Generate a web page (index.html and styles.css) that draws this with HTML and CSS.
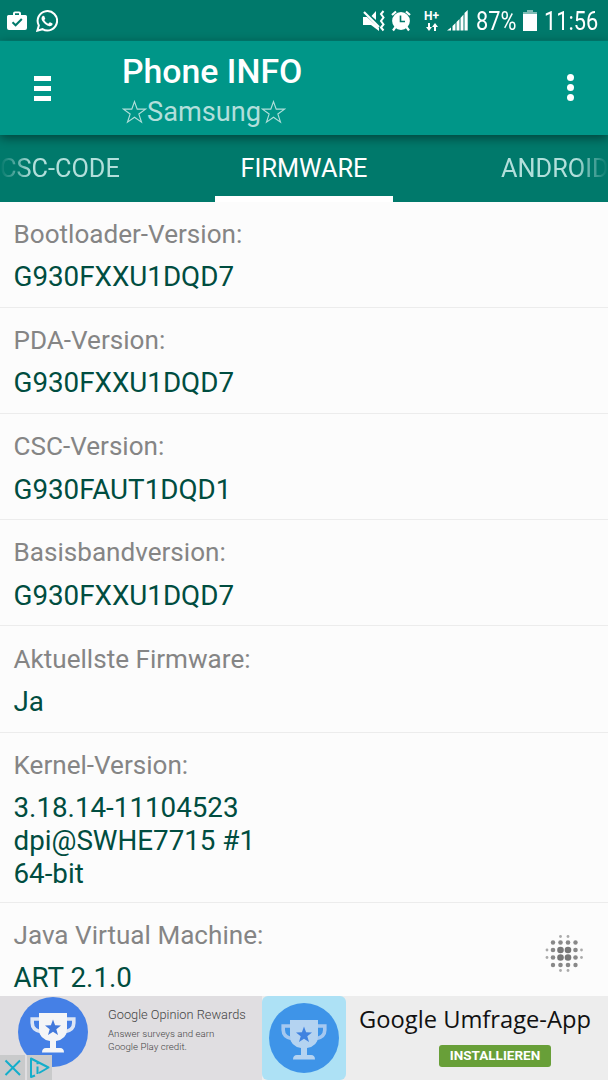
FILE: index.html
```html
<!DOCTYPE html>
<html lang="de">
<head>
    <meta charset="UTF-8">
    <meta name="viewport" content="width=device-width, initial-scale=1.0">
    <title>Phone INFO</title>
    <link rel="stylesheet" href="styles.css">
</head>
<body>
    <svg width="0" height="0" class="defs">
        <symbol id="trophy" viewBox="0 0 46 40">
            <path class="handles" d="M10 6H2.200V10Q2.200 17.500 12 19M36 6H43.800V10Q43.800 17.500 34 19" fill="none" stroke-width="3.600"/>
            <path class="cup" d="M9 0H37V16Q37 26 26 28V35H30Q34 35 34 39.500H12Q12 35 16 35H20V28Q9 26 9 16Z"/>
            <path class="star" d="M23 6.500L25.100 12.300L31 12.500L26.300 16.200L28 22L23 18.700L18 22L19.700 16.200L15 12.500L20.900 12.300Z"/>
        </symbol>
    </svg>
    <div class="status-bar">
        <svg class="icon-market" width="20" height="20" viewBox="0 0 20 20">
            <path fill="#fff" fill-rule="evenodd" d="M1.500 4H6V2.500Q6 .500 8 .500H12Q14 .500 14 2.500V4H18.500Q20 4 20 5.500V17Q20 19 18 19H2Q0 19 0 17V5.500Q0 4 1.500 4ZM8 4H12V2.300H8Z"/>
            <path fill="none" stroke="#00796b" stroke-width="2" d="M5.500 11.300L8.600 14.300L14.800 8"/>
        </svg>
        <svg class="icon-whatsapp" width="22" height="22" viewBox="0 0 24 24" fill="#fff">
            <path d="M17.472 14.382c-.297-.149-1.758-.867-2.030-.967-.273-.099-.471-.148-.670.150-.197.297-.767.966-.940 1.164-.173.199-.347.223-.644.075-.297-.150-1.255-.463-2.390-1.475-.883-.788-1.480-1.761-1.653-2.059-.173-.297-.018-.458.130-.606.134-.133.298-.347.446-.520.149-.174.198-.298.298-.497.099-.198.050-.371-.025-.520-.075-.149-.669-1.612-.916-2.207-.242-.579-.487-.500-.669-.510-.173-.008-.371-.010-.570-.010-.198 0-.520.074-.792.372-.272.297-1.040 1.016-1.040 2.479 0 1.462 1.065 2.875 1.213 3.074.149.198 2.096 3.200 5.077 4.487.709.306 1.262.489 1.694.625.712.227 1.360.195 1.871.118.571-.085 1.758-.719 2.006-1.413.248-.694.248-1.289.173-1.413-.074-.124-.272-.198-.570-.347"/>
            <path fill="none" stroke="#fff" stroke-width="2.200" d="M1.500 22.500L3.100 16.800A10.600 10.600 0 1 1 7.100 20.900Z"/>
        </svg>
        <svg class="icon-mute" width="22" height="22" viewBox="0 0 22 22">
            <path fill="#fff" d="M0 7H4L16 18V21L8 15H0ZM8.500 6L13 1V10Z"/>
            <path fill="none" stroke="#fff" stroke-width="2.200" d="M1 2L16 17"/>
            <path fill="none" stroke="#fff" stroke-width="2" d="M20.500 1L18 4L20.500 7.500L18 11L20.500 14.500L18 17.500L20.500 20.500"/>
        </svg>
        <svg class="icon-alarm" width="20" height="22" viewBox="0 0 20 22">
            <circle cx="10" cy="11" r="8.900" fill="#fff"/>
            <path fill="none" stroke="#fff" stroke-width="2.200" d="M1 5L5 1.500M19 5L15 1.500M4.500 17L2 20.500M15.500 17L18 20.500"/>
            <path fill="none" stroke="#00796b" stroke-width="1.600" d="M9.500 5.500V11.500H14"/>
        </svg>
        <div class="network">
            <span>H+</span>
            <svg width="12" height="8" viewBox="0 0 12 8" fill="#fff">
                <path d="M2 0H4V4H6L3 8L0 4H2ZM8 8H10V4H12L9 0L6 4H8Z"/>
            </svg>
        </div>
        <svg class="icon-signal" width="21" height="21" viewBox="0 0 21 21" fill="#fff">
            <path d="M0 20.500L4 17.500V20.500ZM5.500 16L8.500 13V20.500H5.500ZM9.500 12L12.500 9V20.500H9.500ZM13.500 8L16.500 4.500V20.500H13.500ZM17.500 3L20.700 0V20.500H17.500Z"/>
        </svg>
        <span class="status-text percent">87%</span>
        <svg class="icon-battery" width="14" height="21" viewBox="0 0 14 21">
            <path fill="#80bcb5" d="M4 0H10V2H14V4H0V2H4Z"/>
            <path fill="#fff" d="M0 4H14V21H0Z"/>
        </svg>
        <span class="status-text time">11:56</span>
    </div>

    <header class="toolbar">
        <div class="menu-btn"><i></i><i></i><i></i></div>
        <div class="titles">
            <h1>Phone INFO</h1>
            <div class="subtitle"><svg class="title-star" viewBox="0 0 24 23"><path d="M12 1.500L14.600 8.800H22.600L16.200 13.500L18.700 21.200L12 16.500L5.300 21.200L7.800 13.500L1.400 8.800H9.400Z"/></svg><span>Samsung</span><svg class="title-star" viewBox="0 0 24 23"><path d="M12 1.500L14.600 8.800H22.600L16.200 13.500L18.700 21.200L12 16.500L5.300 21.200L7.800 13.500L1.400 8.800H9.400Z"/></svg></div>
        </div>
        <div class="more-btn"><i></i><i></i><i></i></div>
    </header>

    <nav class="tabs">
        <div class="tab tab-prev"><span>CSC-CODE</span></div>
        <div class="tab active"><span>FIRMWARE</span></div>
        <div class="tab tab-next"><span>ANDROID</span></div>
    </nav>

    <main class="info-list">
        <div class="info">
            <div class="label">Bootloader-Version:</div>
            <div class="value">G930FXXU1DQD7</div>
        </div>
        <div class="info">
            <div class="label">PDA-Version:</div>
            <div class="value">G930FXXU1DQD7</div>
        </div>
        <div class="info">
            <div class="label">CSC-Version:</div>
            <div class="value">G930FAUT1DQD1</div>
        </div>
        <div class="info">
            <div class="label">Basisbandversion:</div>
            <div class="value">G930FXXU1DQD7</div>
        </div>
        <div class="info">
            <div class="label">Aktuellste Firmware:</div>
            <div class="value">Ja</div>
        </div>
        <div class="info info-multiline">
            <div class="label">Kernel-Version:</div>
            <div class="value">3.18.14-11104523<br>dpi@SWHE7715 #1<br>64-bit</div>
        </div>
        <div class="info">
            <div class="label">Java Virtual Machine:</div>
            <div class="value">ART 2.1.0</div>
        </div>
        <svg class="dots" width="40" height="40" viewBox="0 0 40 40">
            <g fill="#777">
                <circle cx="16.500" cy="16" r="3.300"/><circle cx="24" cy="16" r="3.300"/>
                <circle cx="16.500" cy="23.500" r="3.300"/><circle cx="24" cy="23.500" r="3.300"/>
            </g>
            <g fill="#888">
                <circle cx="9" cy="8.500" r="2.200"/><circle cx="16.500" cy="8.500" r="2.300"/><circle cx="24" cy="8.500" r="2.300"/><circle cx="31.500" cy="8.500" r="2.200"/>
                <circle cx="9" cy="16" r="2.300"/><circle cx="31.500" cy="16" r="2.300"/>
                <circle cx="9" cy="23.500" r="2.300"/><circle cx="31.500" cy="23.500" r="2.300"/>
                <circle cx="9" cy="31" r="2.200"/><circle cx="16.500" cy="31" r="2.300"/><circle cx="24" cy="31" r="2.300"/><circle cx="31.500" cy="31" r="2.200"/>
            </g>
            <g fill="#aaa">
                <circle cx="16.500" cy="2.500" r="1.400"/><circle cx="24" cy="2.500" r="1.400"/>
                <circle cx="3" cy="16" r="1.400"/><circle cx="37.500" cy="16" r="1.400"/>
                <circle cx="3" cy="23.500" r="1.400"/><circle cx="37.500" cy="23.500" r="1.400"/>
                <circle cx="16.500" cy="36.500" r="1.400"/><circle cx="24" cy="36.500" r="1.400"/>
            </g>
        </svg>
    </main>

    <footer class="ad">
        <div class="ad-preview">
            <div class="badge"><svg width="46" height="40"><use href="#trophy"/></svg></div>
            <div class="ad-text">
                <div class="ad-name">Google Opinion Rewards</div>
                <p>Answer surveys and earn<br>Google Play credit.</p>
            </div>
            <div class="ad-controls">
                <svg width="25" height="25" viewBox="0 0 25 25"><path d="M5.500 5.500L20 20M20 5.500L5.500 20"/></svg>
                <svg width="25" height="25" viewBox="0 0 25 25"><path d="M8 20.500L4 22V3.500L21.500 12.500L12 18M10.500 11.500V19M10.500 7V9.200"/></svg>
            </div>
        </div>
        <div class="ad-icon">
            <div class="badge badge-light"><svg width="46" height="40"><use href="#trophy"/></svg></div>
        </div>
        <div class="ad-install">
            <div class="app-name">Google Umfrage-App</div>
            <div class="install-btn">INSTALLIEREN</div>
        </div>
    </footer>
</body>
</html>
```
FILE: styles.css
```css
html, body {
    margin: 0;
    padding: 0;
}

body {
    display: flex;
    flex-direction: column;
    height: 1080px;
    overflow: hidden;
    background: #fcfcfc;
    font-family: Roboto, sans-serif;
}

.defs {
    position: absolute;
}

/* Status bar */
.status-bar {
    display: flex;
    align-items: center;
    flex: none;
    box-sizing: border-box;
    height: 41px;
    padding: 1px 8px 0 7px;
    background: #00796b;
    border-bottom: 1px solid #008074;
    color: #fff;
}

.status-bar svg {
    flex: none;
}

.icon-whatsapp {
    margin-left: 9px;
}

.icon-mute {
    margin-left: auto;
}

.icon-alarm {
    margin-left: 6px;
}

.network {
    display: flex;
    flex-direction: column;
    align-items: center;
    width: 15px;
    margin-left: 13px;
    padding-top: 2px;
    gap: 2px;
    font-size: 12px;
    font-weight: 700;
    line-height: 9px;
}

.icon-signal {
    margin-left: 8px;
}

.status-text {
    flex: none;
    padding-top: 2px;
    font-size: 25px;
    line-height: 30px;
    transform: scaleX(0.87);
    transform-origin: left;
    white-space: nowrap;
}

.percent {
    width: 41px;
    margin-left: 8px;
    margin-right: 6px;
}

.time {
    width: 56px;
    margin-left: 7px;
}

/* Toolbar */
.toolbar {
    display: flex;
    align-items: flex-start;
    flex: none;
    height: 94px;
    background: #009688;
    color: #fff;
    box-shadow: 0 3px 10px rgba(0, 0, 0, 0.45);
    z-index: 1;
}

.menu-btn {
    display: flex;
    flex-direction: column;
    gap: 5px;
    width: 17px;
    margin: 35px 71px 0 34px;
}

.menu-btn i {
    height: 5px;
    background: #fff;
}

h1 {
    margin: 12px 0 0;
    font-size: 33.8px;
    font-weight: 500;
    line-height: 38px;
}

.subtitle {
    display: flex;
    align-items: center;
    height: 34px;
    margin-top: 4px;
    color: #b2dfdb;
    font-size: 27.2px;
}

.title-star {
    width: 25px;
    height: 24px;
    fill: none;
    stroke: #b2dfdb;
    stroke-width: 1.1;
}

.more-btn {
    display: flex;
    flex-direction: column;
    gap: 3px;
    margin: 33px 34px 0 auto;
}

.more-btn i {
    width: 7px;
    height: 7px;
    background: #fff;
    border-radius: 50%;
}

/* Tabs */
.tabs {
    display: grid;
    grid-template-columns: 215px 178px 215px;
    flex: none;
    height: 67px;
    background: #00796b;
    color: #fff;
    font-size: 25.3px;
    line-height: 68px;
    white-space: nowrap;
}

.tab {
    box-sizing: border-box;
    height: 67px;
    overflow: hidden;
}

.tab-prev,
.tab-next {
    color: #b2dfdb;
}

.tab-prev {
    -webkit-mask-image: linear-gradient(to right, transparent, #000 32px);
    mask-image: linear-gradient(to right, transparent, #000 32px);
}

.tab-next {
    padding-left: 108px;
    -webkit-mask-image: linear-gradient(to left, transparent, #000 32px);
    mask-image: linear-gradient(to left, transparent, #000 32px);
}

.tab.active {
    text-align: center;
    border-bottom: 6px solid #fff;
}

/* Firmware list */
.info-list {
    position: relative;
    flex: 1;
    min-height: 0;
    margin-top: -0.7px;
    overflow: hidden;
}

.info {
    padding: 17.2px 14px 13px 13.5px;
    border-bottom: 1px solid #ececec;
}

.info-multiline {
    padding-bottom: 11.4px;
}

.label {
    margin-bottom: 12.5px;
    color: #858585;
    font-size: 26.1px;
    line-height: 30px;
}

.value {
    color: #004d40;
    font-size: 27.75px;
    line-height: 32.6px;
}

.dots {
    position: absolute;
    right: 24px;
    bottom: 22px;
}

/* Ad banner */
.ad {
    display: flex;
    flex: none;
    height: 84px;
    background: #ededed;
}

.ad-preview {
    position: relative;
    display: flex;
    box-sizing: border-box;
    width: 262px;
    padding-left: 18px;
    background: #e0dee1;
}

.badge {
    display: flex;
    align-items: center;
    justify-content: center;
    flex: none;
    width: 70px;
    height: 70px;
    margin-top: 0.5px;
    background: #4580e6;
    border-radius: 50%;
}

.badge svg {
    margin-top: 3px;
}

.handles {
    stroke: #dce5f5;
}

.cup {
    fill: #f4f5f7;
}

.star {
    fill: #4279dc;
}

.ad-text {
    margin: 11px 0 0 20px;
    color: #444;
    white-space: nowrap;
}

.ad-name {
    font-size: 12.8px;
    font-weight: 300;
    line-height: 16px;
}

.ad-text p {
    margin: 4px 0 0;
    font-size: 9.7px;
    font-weight: 300;
    line-height: 13px;
}

.ad-controls {
    position: absolute;
    left: 0;
    bottom: 0;
    display: flex;
    gap: 2px;
}

.ad-controls svg {
    background: #c9cacb;
    fill: none;
    stroke: #13aecb;
    stroke-width: 2;
    stroke-linejoin: round;
}

.ad-icon {
    display: flex;
    align-items: center;
    justify-content: center;
    flex: none;
    width: 84px;
    background: #ade1f5;
    border-radius: 6px;
}

.badge-light {
    background: #3e94e8;
}

.badge-light svg {
    opacity: 0.65;
}

.ad-install {
    display: flex;
    flex-direction: column;
    align-items: center;
    flex: 1;
    padding: 7px 4px 0 0;
}

.app-name {
    color: #111;
    font-family: "Open Sans", sans-serif;
    font-size: 23.7px;
    line-height: 32px;
    white-space: nowrap;
}

.install-btn {
    width: 112px;
    height: 22px;
    margin: 10px 0 0 40px;
    background: #689f38;
    border-radius: 3px;
    color: #fff;
    font-size: 13.5px;
    font-weight: 700;
    line-height: 21px;
    text-align: center;
}
```
